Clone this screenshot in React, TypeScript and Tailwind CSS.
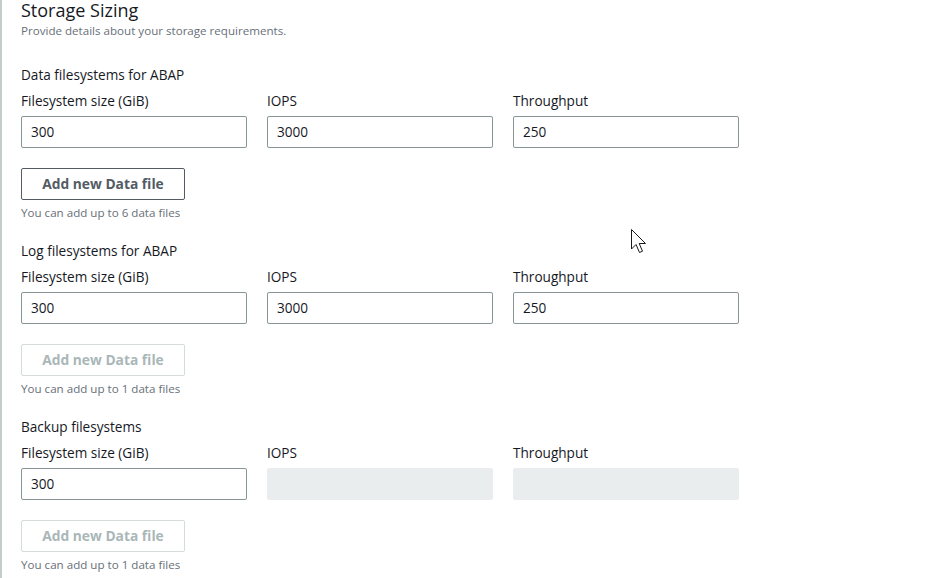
import React from "react";

const font = { fontFamily: '"Open Sans", "Noto Sans", Arial, sans-serif' };

function Field({ label, value, disabled }: { label: string; value?: string; disabled?: boolean }) {
  return (
    <div className="flex flex-col w-[226px]">
      <div className="text-[13.6px] leading-[20px] text-[#16191f] mb-[5px]">{label}</div>
      {disabled ? (
        <div className="h-[32px] rounded-[2px] bg-[#eaeded] border border-[#eaeded]" />
      ) : (
        <div className="h-[32px] rounded-[2px] border border-[#879596] bg-white px-[9px] flex items-center text-[13.6px] text-[#16191f]">
          {value}
        </div>
      )}
    </div>
  );
}

function Section({
  title,
  iops,
  tp,
  disabledFields,
  disabledButton,
  limit,
}: {
  title: string;
  iops?: string;
  tp?: string;
  disabledFields?: boolean;
  disabledButton?: boolean;
  limit: number;
}) {
  return (
    <div className="flex flex-col">
      <div className="text-[13.6px] leading-[20px] text-[#16191f] mb-[6px]">{title}</div>
      <div className="flex gap-[20px]">
        <Field label="Filesystem size (GiB)" value="300" />
        <Field label="IOPS" value={iops} disabled={disabledFields} />
        <Field label="Throughput" value={tp} disabled={disabledFields} />
      </div>
      <div className="mt-[20px]">
        <div
          className={
            disabledButton
              ? "w-[164px] h-[32px] rounded-[2px] border border-[#d5dbdb] text-[#aab7b8] flex items-center justify-center text-[13.8px] font-bold"
              : "w-[164px] h-[32px] rounded-[2px] border border-[#545b64] text-[#545b64] flex items-center justify-center text-[13.8px] font-bold"
          }
        >
          Add new Data file
        </div>
      </div>
      <div className="mt-[5px] text-[11.6px] leading-[16px] text-[#687078]">
        You can add up to {limit} data files
      </div>
    </div>
  );
}

export default function App() {
  return (
    <div className="w-[926px] h-[578px] bg-white overflow-hidden relative" style={font}>
      <div className="flex h-full">
        <div className="w-[2px] h-full bg-[#c6cccc]" />
        <div className="pl-[19px] flex flex-col">
          <div className="text-[18px] leading-[20px] text-[#16191f]">Storage Sizing</div>
          <div className="text-[11.6px] leading-[16px] text-[#687078] mt-[3px]">
            Provide details about your storage requirements.
          </div>
          <div className="mt-[26px] flex flex-col gap-[20px]">
            <Section title="Data filesystems for ABAP" iops="3000" tp="250" limit={6} />
            <Section title="Log filesystems for ABAP" iops="3000" tp="250" disabledButton limit={1} />
            <Section title="Backup filesystems" disabledFields disabledButton limit={1} />
          </div>
        </div>
      </div>
      <svg
        className="absolute left-[631px] top-[229px]"
        width="18"
        height="28"
        viewBox="0 0 18 28"
      >
        <path
          d="M0.5 0.5 L0.5 20 L5 15.5 L8.5 23.5 L11.5 22.2 L8.2 14.5 L14.5 14.5 Z"
          fill="white"
          stroke="#1a1a1a"
          strokeWidth="1"
          strokeLinejoin="miter"
        />
      </svg>
    </div>
  );
}
